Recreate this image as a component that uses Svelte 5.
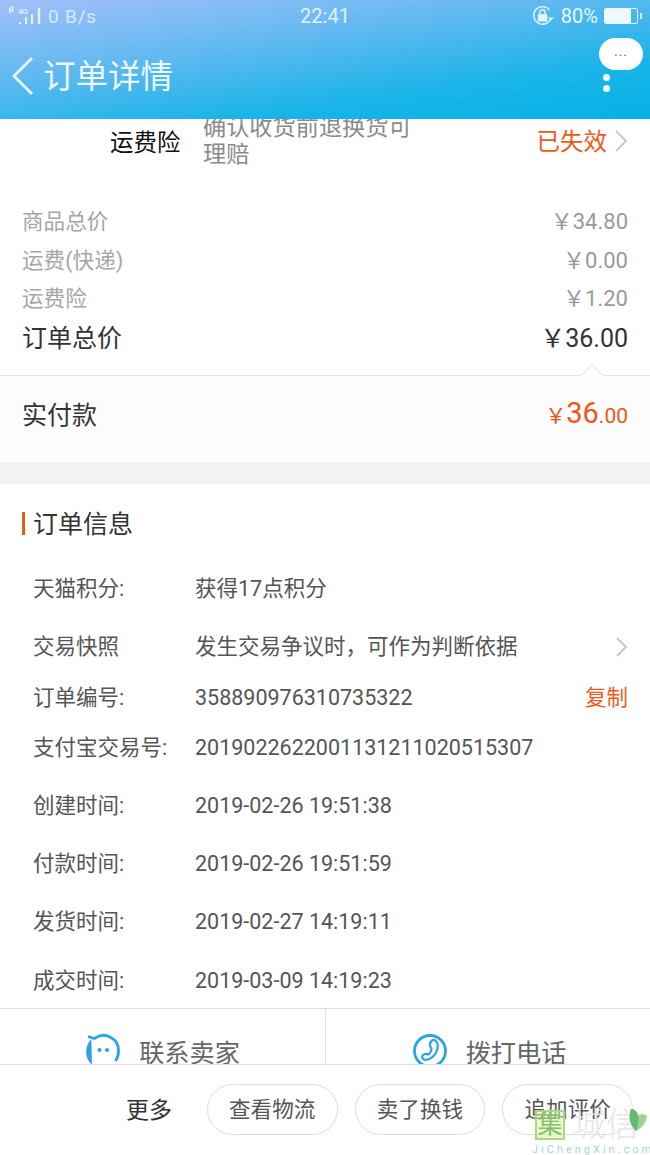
<script lang="ts">
	const fees = [
		{ label: '商品总价', value: '34.80' },
		{ label: '运费(快递)', value: '0.00' },
		{ label: '运费险', value: '1.20' }
	];
	const times = [
		{ label: '创建时间:', value: '2019-02-26 19:51:38' },
		{ label: '付款时间:', value: '2019-02-26 19:51:59' },
		{ label: '发货时间:', value: '2019-02-27 14:19:11' },
		{ label: '成交时间:', value: '2019-03-09 14:19:23' }
	];
	const actions = ['查看物流', '卖了换钱', '追加评价'];
</script>

<div class="page">
	<header class="top">
		<div class="status">
			<div class="status-left">
				<svg width="38" height="24" viewBox="0 0 38 24">
					<g stroke="#f2f8ff" opacity="0.9">
						<path d="M4 3v6M6.500 2v6" stroke-width="1.600" />
						<path d="M14 20v-2M20 20v-7" stroke-width="2" />
						<path d="M26 20v-10" stroke-width="2.200" />
						<path d="M33 20V4" stroke-width="2.400" />
					</g>
					<text x="12" y="9.500" class="tiny">4G</text>
				</svg>
				<span>0 B/s</span>
			</div>
			<span class="clock">22:41</span>
			<div class="status-right">
				<svg width="24" height="24" viewBox="0 0 24 24" fill="none" stroke="#e4f5ff" stroke-width="1.400">
					<path d="M19.800 14.500A8.800 8.800 0 1 1 18.500 6" />
					<path d="M23 13.500h-6l3 3z" fill="#e4f5ff" stroke="none" />
					<rect x="6.800" y="10" width="9.500" height="7.500" rx="1" fill="#e4f5ff" stroke="none" />
					<path d="M8.800 10.500V8.500a2.700 2.700 0 0 1 5.400 0v2" />
				</svg>
				<span>80%</span>
				<div class="battery"><div class="battery-fill"></div></div>
			</div>
		</div>
		<div class="titlebar">
			<svg class="back" width="24" height="40" viewBox="0 0 24 40" fill="none" stroke="#e8f7fd" stroke-width="2.800">
				<path d="M21 2 3 20l18 18" />
			</svg>
			<h1>订单详情</h1>
		</div>
		<div class="more">
			<div class="bubble">···</div>
			<i></i>
			<i></i>
		</div>
	</header>

	<main class="content">
		<section class="insurance">
			<span class="ins-name">运费险</span>
			<span class="ins-desc">确认收货前退换货可理赔</span>
			<span class="ins-state">已失效</span>
			<svg width="14" height="24" viewBox="0 0 14 24" fill="none" stroke="#c9c9c9" stroke-width="2">
				<path d="m2 2 10 10L2 22" />
			</svg>
		</section>

		<section class="fees">
			{#each fees as f}
				<div class="fee">
					<span>{f.label}</span>
					<span class="num">￥{f.value}</span>
				</div>
			{/each}
			<div class="total">
				<span>订单总价</span>
				<span class="num">￥36.00</span>
			</div>
		</section>

		<section class="paid">
			<span class="caret"></span>
			<span>实付款</span>
			<span class="paid-num"><small>￥</small><b>36</b><small>.00</small></span>
		</section>

		<div class="gap"></div>

		<section class="info">
			<h2>订单信息</h2>
			<div class="row r-points"><span class="k">天猫积分:</span><span class="v">获得17点积分</span></div>
			<div class="row r-snap">
				<span class="k">交易快照</span><span class="v grow">发生交易争议时，可作为判断依据</span>
				<svg width="14" height="22" viewBox="0 0 14 22" fill="none" stroke="#c4c4c4" stroke-width="1.800">
					<path d="m2 2 9 9-9 9" />
				</svg>
			</div>
			<div class="row r-order">
				<span class="k">订单编号:</span><span class="v grow">358890976310735322</span>
				<span class="copy">复制</span>
			</div>
			<div class="row r-alipay"><span class="k">支付宝交易号:</span><span class="v">2019022622001131211020515307</span></div>
			{#each times as t}
				<div class="row r-time"><span class="k">{t.label}</span><span class="v">{t.value}</span></div>
			{/each}
		</section>
	</main>

	<section class="contact">
		<div class="contact-item">
			<svg width="36" height="36" viewBox="0 0 36 36" fill="none" stroke="#2aa4e6" stroke-width="2.800">
				<path d="M3 3.500 9.500 5.500A15 15 0 0 1 33.500 18c0 4-1 7-3 10M5.500 28C3 25 2.500 21 2.500 18c0-3 .8-5.500 2.500-8z" />
				<circle cx="14.500" cy="17" r="2.100" fill="#2aa4e6" stroke="none" />
				<circle cx="22" cy="17" r="2.100" fill="#2aa4e6" stroke="none" />
			</svg>
			<span>联系卖家</span>
		</div>
		<div class="contact-item second">
			<svg width="36" height="36" viewBox="0 0 36 36" fill="none" stroke="#2aa4e6" stroke-width="2.800">
				<circle cx="18" cy="18" r="15.500" />
				<path d="M20 7.500c1.500-1 3.500-.5 4.500 1 2.500 4 1 10-2.500 14-3 3-7 5-10 4-2-.7-2.500-3-1-4.500 1.500-1.300 3.500-1.500 5-.5 1.500-.5 3-3 3.500-6-1-1-1.500-2-1.500-3.500 0-1.800.5-3.500 2-4.500z" stroke-width="2.200" />
			</svg>
			<span>拨打电话</span>
		</div>
	</section>

	<footer class="bottom">
		<span class="more-label">更多</span>
		{#each actions as a}
			<button class="pill">{a}</button>
		{/each}
	</footer>

	<div class="mark">
		<div class="mark-logo">
			<span class="mark-box">集</span>
			<span class="mark-cn">城信</span>
			<svg class="leaf" width="20" height="24" viewBox="0 0 20 24">
				<path d="M8 23C2 17 0 9 3 1c4 0 6 3 7 6 3-1 6-1 9 1-1 7-5 12-11 15z" fill="#9ad68c" />
				<path d="M8 23C2 17 0 9 3 1c4 0 6 3 7 6 1 6 0 11-2 16z" fill="#63b878" />
			</svg>
		</div>
		<div class="mark-url">JiChengXin.com</div>
	</div>
</div>

<style>
	:global(body) {
		margin: 0;
	}
	.page {
		position: relative;
		width: 650px;
		height: 1155px;
		overflow: hidden;
		background: #fff;
		font-family: Roboto, 'Noto Sans CJK SC', sans-serif;
		display: flex;
		flex-direction: column;
	}
	.top {
		position: relative;
		z-index: 2;
		height: 119px;
		flex: none;
		background: linear-gradient(172deg, #a3bffb 0%, #6bbaf2 32%, #1ab4e8 72%, #06b2e6 100%);
		color: #fff;
	}
	.status {
		display: flex;
		justify-content: space-between;
		align-items: center;
		height: 32px;
		padding: 0 12px 0 6px;
		font-size: 20px;
		color: #eaf6ff;
	}
	.status-left,
	.status-right {
		display: flex;
		align-items: center;
		gap: 4px;
		width: 130px;
	}
	.status-left span {
		opacity: 0.8;
		font-size: 19px;
		letter-spacing: 0.8px;
	}
	.status-right {
		justify-content: flex-end;
		gap: 6px;
		white-space: nowrap;
	}
	.tiny {
		font-size: 8px;
		fill: #fff;
		font-family: Roboto, sans-serif;
	}
	.clock {
		margin-left: 6px;
		color: #f0f8ff;
		opacity: 0.9;
	}
	.battery {
		position: relative;
		box-sizing: border-box;
		width: 34px;
		height: 16px;
		border: 1.500px solid #e4f5ff;
		border-radius: 2px;
	}
	.battery::after {
		content: '';
		position: absolute;
		right: -4.500px;
		top: 3.500px;
		width: 2px;
		height: 6px;
		background: #e4f5ff;
	}
	.battery-fill {
		width: 80%;
		height: 100%;
		background: #eef9ff;
	}
	.titlebar {
		display: flex;
		align-items: center;
		gap: 8px;
		height: 87px;
		padding-left: 11px;
	}
	.titlebar .back {
		margin-top: 1px;
	}
	h1 {
		margin: 0;
		font-size: 32.500px;
		font-weight: 400;
		color: #eef9fd;
		line-height: 1;
		transform: translateY(2px);
	}
	.more {
		position: absolute;
		top: 38px;
		right: 7px;
		display: flex;
		flex-direction: column;
		align-items: flex-start;
	}
	.bubble {
		width: 44px;
		height: 32px;
		border-radius: 16px;
		background: #fff;
		color: #5a6a7a;
		font-size: 14px;
		letter-spacing: 1px;
		line-height: 37px;
		text-align: center;
	}
	.more i {
		width: 7px;
		height: 7px;
		border-radius: 50%;
		background: #f2fbff;
		margin: 4px 0 0 4px;
	}
	.content {
		flex: 1;
		min-height: 0;
		overflow: hidden;
	}
	.insurance {
		display: flex;
		align-items: center;
		height: 60px;
		margin-top: -8px;
		padding: 0 22px 0 110px;
	}
	.ins-name {
		width: 93px;
		flex: none;
		font-size: 23.500px;
		color: #111;
	}
	.ins-desc {
		width: 212px;
		flex: none;
		font-size: 23.200px;
		line-height: 27px;
		color: #8a8a8a;
	}
	.ins-state {
		margin-left: auto;
		margin-right: 7px;
		font-size: 23.500px;
		color: #ee5a16;
		transform: translateY(-1px);
	}
	.fees {
		padding: 32px 22px 0;
	}
	.fee {
		display: flex;
		justify-content: space-between;
		align-items: baseline;
		height: 38.500px;
		line-height: 38.500px;
		font-size: 21.600px;
		color: #a6a6a6;
	}
	.fee .num {
		color: #9a9a9a;
		font-size: 22px;
	}
	.total {
		display: flex;
		justify-content: space-between;
		align-items: baseline;
		height: 43px;
		line-height: 39px;
		font-size: 25px;
		color: #333;
	}
	.paid {
		position: relative;
		box-sizing: border-box;
		height: 87px;
		margin-top: 13px;
		padding: 0 22px 11px;
		display: flex;
		justify-content: space-between;
		align-items: center;
		background: #fcfcfc;
		border-top: 1px solid #e6e6e6;
		font-size: 25px;
		color: #333;
	}
	.caret {
		position: absolute;
		top: -9px;
		right: 50px;
		width: 15px;
		height: 15px;
		background: #fcfcfc;
		border: 1px solid #e6e6e6;
		border-width: 1px 0 0 1px;
		transform: rotate(45deg);
	}
	.paid-num {
		color: #e8581a;
		display: flex;
		align-items: baseline;
	}
	.paid-num small {
		font-size: 21px;
	}
	.paid-num b {
		font-weight: 400;
		font-size: 29px;
	}
	.gap {
		height: 22px;
		background: #f2f2f2;
	}
	.info {
		padding-left: 33px;
		padding-right: 22px;
	}
	h2 {
		position: relative;
		margin: 0;
		height: 76px;
		line-height: 82px;
		font-size: 25px;
		font-weight: 400;
		color: #333;
	}
	h2::before {
		content: '';
		position: absolute;
		left: -11px;
		top: 28px;
		width: 2.500px;
		height: 23px;
		background: #ee5a16;
	}
	.row {
		display: flex;
		align-items: baseline;
		font-size: 21.500px;
		color: #555;
	}
	.k {
		width: 162px;
		flex: none;
		white-space: nowrap;
		color: #555;
	}
	.v {
		white-space: nowrap;
		color: #555;
	}
	.grow {
		flex: 1;
	}
	.r-points,
	.r-snap {
		height: 58px;
		line-height: 58px;
	}
	.r-order {
		height: 44px;
		line-height: 44px;
	}
	.r-alipay {
		height: 57px;
		line-height: 56px;
	}
	.r-time {
		height: 58.400px;
		line-height: 58.400px;
	}
	.r-snap svg {
		align-self: center;
		margin-right: -1px;
	}
	.copy {
		color: #ee5a16;
	}
	.contact {
		flex: none;
		box-sizing: border-box;
		height: 56px;
		overflow: hidden;
		display: flex;
		border-top: 1px solid #dcdcdc;
		background: #fff;
	}
	.contact-item {
		flex: 0 0 325px;
		height: 64px;
		padding-top: 19px;
		box-sizing: border-box;
		display: flex;
		justify-content: center;
		align-items: center;
		gap: 18px;
		font-size: 25.200px;
		color: #666;
	}
	.contact-item.second {
		border-left: 1px solid #e4e4e4;
		padding-left: 2px;
	}
	.bottom {
		flex: none;
		box-sizing: border-box;
		height: 91px;
		border-top: 1px solid #dcdcdc;
		background: #fff;
		display: flex;
		align-items: center;
		padding: 0 17px 1px 126px;
		gap: 17px;
	}
	.more-label {
		width: 64px;
		padding-bottom: 4px;
		font-size: 23px;
		color: #333;
	}
	.pill {
		width: 131px;
		height: 51px;
		padding: 0 0 4px;
		border: 1px solid #dcdcdc;
		border-radius: 26px;
		background: #fff;
		font-family: inherit;
		font-size: 21.600px;
		color: #555;
	}
	.mark {
		position: absolute;
		left: 535px;
		top: 1109px;
		width: 115px;
	}
	.mark-logo {
		display: flex;
		align-items: center;
		height: 31px;
	}
	.mark-box {
		box-sizing: border-box;
		width: 30px;
		height: 30px;
		border: 2px solid #a9d783;
		background: rgba(214, 243, 170, 0.55);
		color: #86bf66;
		font-size: 25px;
		line-height: 26px;
		text-align: center;
	}
	.mark-cn {
		margin-left: 8px;
		font-size: 33px;
		font-weight: 300;
		line-height: 31px;
		color: #e6e6e6;
		white-space: nowrap;
	}
	.leaf {
		position: absolute;
		left: 93px;
		top: -1px;
	}
	.mark-url {
		margin: 3px 0 0 -3px;
		font-size: 11px;
		letter-spacing: 3px;
		color: #a8d8c8;
		white-space: nowrap;
	}
</style>
